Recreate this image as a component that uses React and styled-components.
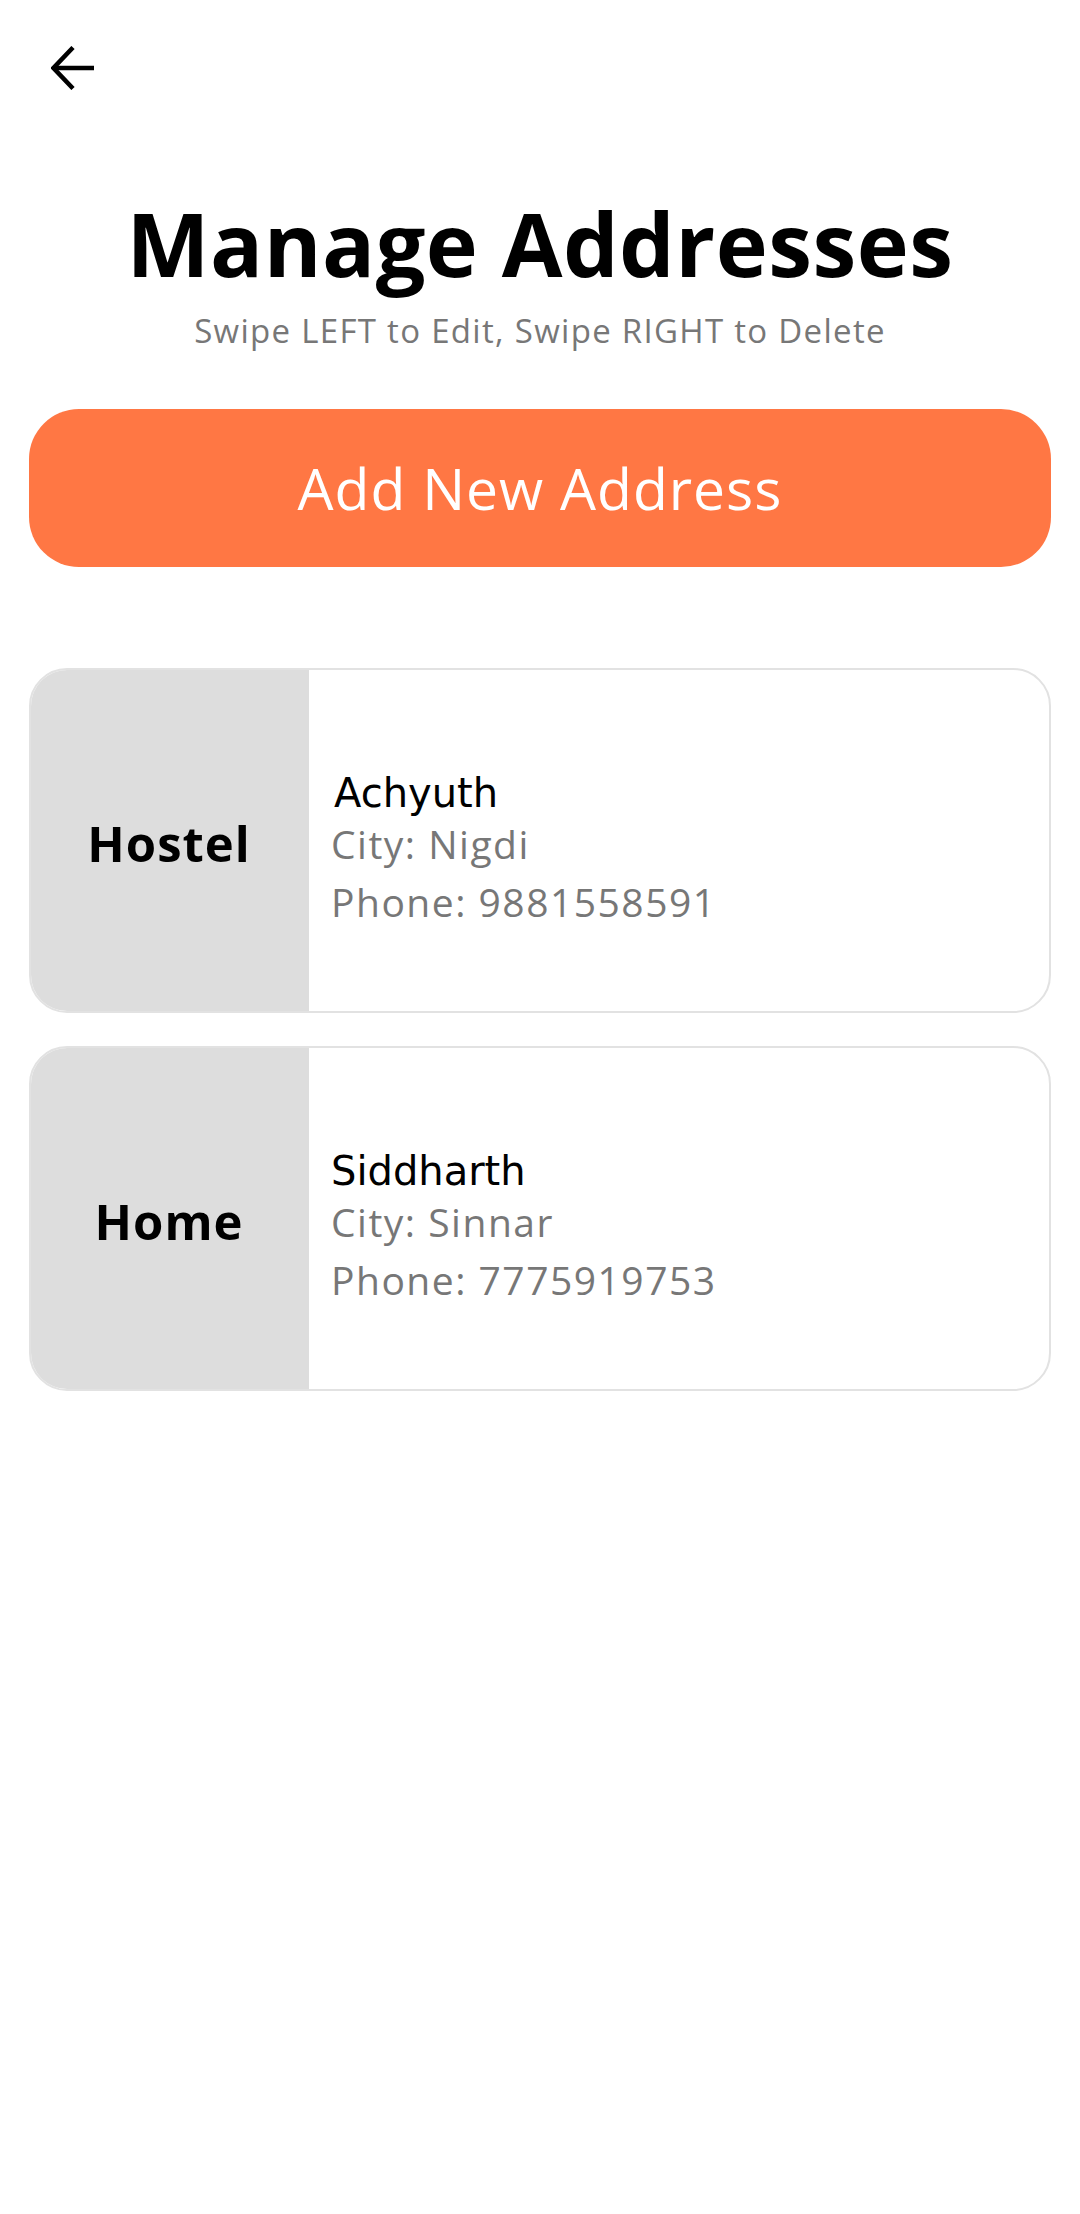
import React from 'react'
import styled, { createGlobalStyle } from 'styled-components'

const GlobalStyle = createGlobalStyle`
    body {
        margin: 0;
        background: #ffffff;
        font-family: "Open Sans", "Noto Sans", sans-serif;
    }
`

const Page = styled.div`
    padding: 0 29px;
    min-height: 2214px;
    box-sizing: border-box;
`

const TopBar = styled.div`
    height: 136px;
    display: flex;
    align-items: center;
    padding-left: 22px;
`

const BackButton = styled.button`
    border: none;
    background: transparent;
    padding: 0;
    width: 44px;
    height: 44px;
    display: flex;
    align-items: center;
    justify-content: center;
    cursor: pointer;
`

const Title = styled.h1`
    margin: 63px 0 0;
    text-align: center;
    font-family: "Open Sans", sans-serif;
    font-weight: 700;
    font-size: 88px;
    line-height: 88px;
    letter-spacing: 0.5px;
    color: #000;
`

const Subtitle = styled.p`
    margin: 25px 0 0;
    text-align: center;
    font-size: 33px;
    line-height: 38px;
    letter-spacing: 1.3px;
    color: #777777;
`

const AddButton = styled.button`
    display: flex;
    align-items: center;
    justify-content: center;
    width: 100%;
    height: 158px;
    margin-top: 59px;
    border: none;
    border-radius: 50px;
    background: #ff7744;
    color: #ffffff;
    font-family: "Open Sans", sans-serif;
    font-size: 57px;
    letter-spacing: 1px;
    cursor: pointer;
`

const List = styled.div`
    margin-top: 101px;
    display: flex;
    flex-direction: column;
    gap: 33px;
`

const Card = styled.div`
    display: flex;
    height: 345px;
    box-sizing: border-box;
    border: 2px solid #e2e2e2;
    border-radius: 38px;
    overflow: hidden;
    background: #ffffff;
`

const TypePanel = styled.div`
    width: 280px;
    flex-shrink: 0;
    margin: -2px 0 -2px -2px;
    background: #dddddd;
    display: flex;
    align-items: center;
    justify-content: center;
    padding-top: 6px;
    box-sizing: border-box;
    font-weight: 700;
    font-size: 49px;
    line-height: 49px;
    letter-spacing: 1px;
    color: #000;
`

const Info = styled.div`
    flex: 1;
    display: flex;
    flex-direction: column;
    justify-content: center;
    padding: 20px 0 0 22px;
`

const Name = styled.div`
    font-family: "DejaVu Sans", sans-serif;
    font-size: 40px;
    line-height: 44px;
    color: #000;
    padding-left: ${(p) => p.$indent || 0}px;
`

const Detail = styled.div`
    font-size: 39px;
    line-height: 58px;
    letter-spacing: 1.5px;
    color: #777777;
`

const addresses = [
    { type: 'Hostel', name: 'Achyuth', city: 'Nigdi', phone: '9881558591', indent: 3 },
    { type: 'Home', name: 'Siddharth', city: 'Sinnar', phone: '7775919753', indent: 0 },
]

function BackArrow() {
    return (
        <svg width="44" height="44" viewBox="0 0 44 44" fill="none">
            <path d="M2 22H43" stroke="#000" strokeWidth="4.5" />
            <path d="M22 1.5L2.5 22L22 42.5" stroke="#000" strokeWidth="4.5" />
        </svg>
    )
}

function App() {
    return (
        <Page>
            <GlobalStyle />
            <TopBar>
                <BackButton aria-label="Back">
                    <BackArrow />
                </BackButton>
            </TopBar>

            <Title>Manage Addresses</Title>
            <Subtitle>Swipe LEFT to Edit, Swipe RIGHT to Delete</Subtitle>

            <AddButton>Add New Address</AddButton>

            <List>
                {addresses.map((a) => (
                    <Card key={a.name}>
                        <TypePanel>{a.type}</TypePanel>
                        <Info>
                            <Name $indent={a.indent}>{a.name}</Name>
                            <Detail>City: {a.city}</Detail>
                            <Detail>Phone: {a.phone}</Detail>
                        </Info>
                    </Card>
                ))}
            </List>
        </Page>
    )
}

export default App
